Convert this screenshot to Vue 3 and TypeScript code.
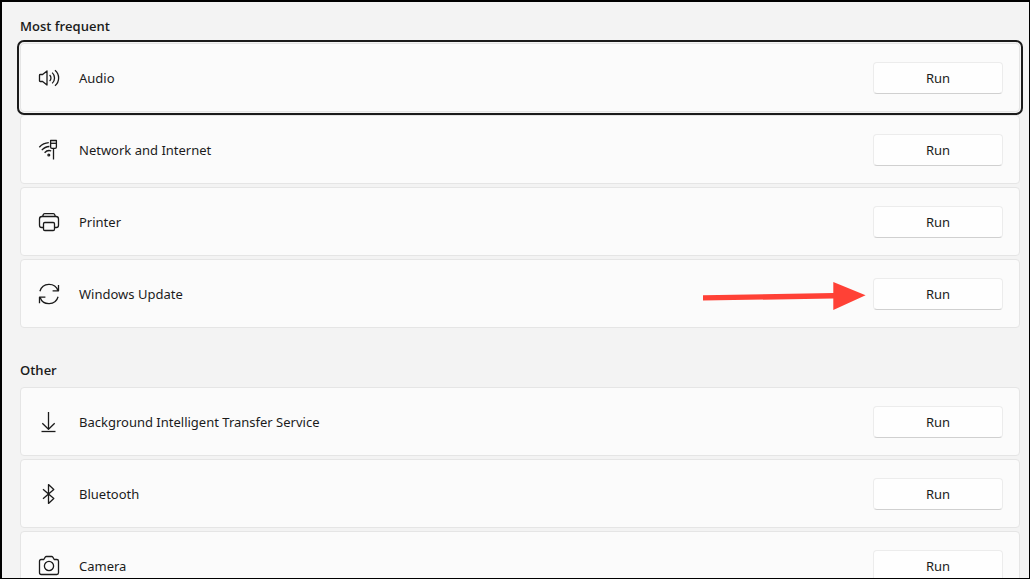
<script setup lang="ts">
interface Troubleshooter {
  id: string
  name: string
  paths: string[]
  focused?: boolean
  highlighted?: boolean
}

interface Group {
  title: string
  items: Troubleshooter[]
}

const groups: Group[] = [
  {
    title: 'Most frequent',
    items: [
      {
        id: 'audio',
        name: 'Audio',
        focused: true,
        paths: [
          'M2.3 7.5H4.6L9 3.9V18.1L4.6 14.5H2.3Q1.5 14.5 1.5 13.7V8.3Q1.5 7.5 2.3 7.5Z',
          'M11.6 8A4 4 0 0 1 11.6 14',
          'M14.2 5.6A7.4 7.4 0 0 1 14.2 16.4',
          'M17 3.2A10.2 10.2 0 0 1 17 18.8',
        ],
      },
      {
        id: 'network',
        name: 'Network and Internet',
        paths: [
          'M12.6 1.5H18.4V8Q18.4 9.3 17 9.3H14Q12.6 9.3 12.6 8Z',
          'M12.6 4.3H18.4',
          'M15.5 9.3V20.5',
          'M1.3 8.2Q5.2 3.9 10.8 3.6',
          'M3.8 11.2Q6.9 7.6 11.4 7.5',
          'M6.6 13.8Q9.6 10.5 13.2 12',
          'M9.9 16A0.9 0.9 0 1 0 11.7 16A0.9 0.9 0 1 0 9.9 16Z',
        ],
      },
      {
        id: 'printer',
        name: 'Printer',
        paths: [
          'M4.7 5.5L5.2 3.8Q5.5 2.7 6.6 2.7H15.4Q16.5 2.7 16.8 3.8L17.3 5.5',
          'M5.5 16.5H3.7Q1.5 16.5 1.5 14.3V8Q1.5 5.5 4 5.5H18Q20.5 5.5 20.5 8V14.3Q20.5 16.5 18.3 16.5H16.5',
          'M6.8 11.5H15.2Q16.5 11.5 16.5 12.8V18.2Q16.5 19.5 15.2 19.5H6.8Q5.5 19.5 5.5 18.2V12.8Q5.5 11.5 6.8 11.5Z',
        ],
      },
      {
        id: 'update',
        name: 'Windows Update',
        highlighted: true,
        paths: [
          'M1.9 8.2A9.5 9.5 0 0 1 20 7.8',
          'M20.5 2V7.8H14.6',
          'M20.1 13.8A9.5 9.5 0 0 1 2 14.2',
          'M1.5 20.2V14.2H7.4',
        ],
      },
    ],
  },
  {
    title: 'Other',
    items: [
      {
        id: 'bits',
        name: 'Background Intelligent Transfer Service',
        paths: ['M10.5 1V18', 'M4.3 12.2L10.5 18.2L16.7 12.2', 'M3.5 20.5H17.5'],
      },
      {
        id: 'bluetooth',
        name: 'Bluetooth',
        paths: ['M5 6.2L15.8 15.6L10.5 20.4V1.6L15.8 6.4L5 15.8'],
      },
      {
        id: 'camera',
        name: 'Camera',
        paths: [
          'M3.2 4.5H5.8L7.2 2.2Q7.6 1.5 8.4 1.5H13.6Q14.4 1.5 14.8 2.2L16.2 4.5H18.8Q20.5 4.5 20.5 6.2V17.8Q20.5 19.5 18.8 19.5H3.2Q1.5 19.5 1.5 17.8V6.2Q1.5 4.5 3.2 4.5Z',
          'M6.4 11A4.6 4.6 0 1 0 15.6 11A4.6 4.6 0 1 0 6.4 11Z',
        ],
      },
    ],
  },
]
</script>

<template>
  <main class="window">
    <section v-for="group in groups" :key="group.title" class="group">
      <h2 class="title">{{ group.title }}</h2>
      <ul class="list">
        <li
          v-for="item in group.items"
          :key="item.id"
          class="card"
          :class="{ focused: item.focused }"
        >
          <svg class="icon" viewBox="0 0 22 22" aria-hidden="true">
            <path v-for="d in item.paths" :key="d" :d="d" />
          </svg>
          <span :id="item.id" class="name">{{ item.name }}</span>
          <svg v-if="item.highlighted" class="arrow" viewBox="0 0 163 28" aria-hidden="true">
            <path d="M0 13.3L130.3 11V0L162.6 13.3L130.3 28V16.5L0 18.6Z" />
          </svg>
          <button type="button" class="run" :aria-describedby="item.id">Run</button>
        </li>
      </ul>
    </section>
  </main>
</template>

<style>
body {
  margin: 0;
}
</style>

<style scoped>
.window {
  box-sizing: border-box;
  height: 100vh;
  overflow: hidden;
  padding: 14px 9px 0 18px;
  border: solid #000;
  border-width: 2px 1px 1px 2px;
  background: #f3f3f3;
  color: #1b1b1b;
  font-family: 'Noto Sans', 'Open Sans', sans-serif;
  font-size: 13px;
  line-height: 20px;
}

.group + .group {
  margin-top: 32px;
}

.title {
  margin: 0 0 7px;
  font-family: 'Open Sans', 'Noto Sans', sans-serif;
  font-size: 13px;
  font-weight: 600;
  line-height: 20px;
}

.list {
  display: flex;
  flex-direction: column;
  gap: 3px;
  margin: 0;
  padding: 0;
  list-style: none;
}

.card {
  position: relative;
  display: flex;
  align-items: center;
  padding: 18px 16px 17px 17px;
  border: 1px solid #e5e5e5;
  border-radius: 4px;
  background: #fbfbfb;
}

.focused {
  z-index: 1;
  outline: 2px solid #1a1a1a;
  outline-offset: 1px;
}

.icon {
  flex: none;
  width: 22px;
  height: 22px;
  margin-right: 19px;
  fill: none;
  stroke: #1b1b1b;
  stroke-width: 1.3;
  stroke-linecap: butt;
  stroke-linejoin: round;
}

.name {
  flex: 1;
}

.arrow {
  position: absolute;
  top: 22px;
  right: 153px;
  width: 163px;
  height: 28px;
  fill: #ff4136;
}

.run {
  flex: none;
  box-sizing: border-box;
  width: 130px;
  height: 32px;
  padding: 0;
  border: 1px solid #ececec;
  border-bottom-color: #d0d0d0;
  border-radius: 4px;
  background: #fefefe;
  color: inherit;
  font: inherit;
}
</style>
